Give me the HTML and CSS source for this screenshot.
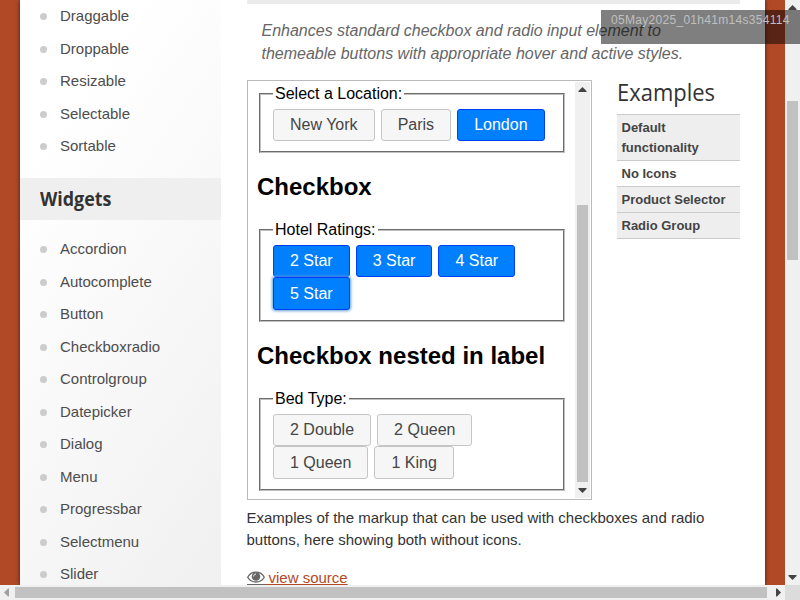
FILE: index.html
```html
<!DOCTYPE html>
<html lang="en">
<head>
<meta charset="utf-8">
<title>Checkboxradio | jQuery UI</title>
<link rel="stylesheet" href="styles.css">
</head>
<body>
<div class="window">
  <div class="page">
    <div class="container">
      <aside class="sidebar">
        <ul class="first">
          <li>Draggable</li><li>Droppable</li><li>Resizable</li><li>Selectable</li><li>Sortable</li>
        </ul>
        <h3 class="widget-title"><span>Widgets</span></h3>
        <ul>
          <li>Accordion</li><li>Autocomplete</li><li>Button</li><li>Checkboxradio</li><li>Controlgroup</li><li>Datepicker</li><li>Dialog</li><li>Menu</li><li>Progressbar</li><li>Selectmenu</li><li>Slider</li>
        </ul>
      </aside>
      <main class="content">
        <div class="rule"></div>
        <p class="desc">Enhances standard checkbox and radio input element to themeable buttons with appropriate hover and active styles.</p>
        <div class="demo-row">
          <div class="frame">
            <div class="doc">
              <div class="doc-body">
                <fieldset>
                  <legend>Select a Location:</legend>
                  <label class="btn">New York</label>
                  <label class="btn">Paris</label>
                  <label class="btn active">London</label>
                </fieldset>
                <h2>Checkbox</h2>
                <fieldset>
                  <legend>Hotel Ratings:</legend>
                  <label class="btn active">2 Star</label>
                  <label class="btn active">3 Star</label>
                  <label class="btn active">4 Star</label>
                  <label class="btn active focus">5 Star</label>
                </fieldset>
                <h2>Checkbox nested in label</h2>
                <fieldset>
                  <legend>Bed Type:</legend>
                  <label class="btn">2 Double</label>
                  <label class="btn">2 Queen</label>
                  <label class="btn">1 Queen</label>
                  <label class="btn">1 King</label>
                </fieldset>
              </div>
            </div>
            <div class="vbar inner">
              <svg class="arrow" viewBox="0 0 15 15"><path d="M3.5 10h8v-1l-4-4-4 4z"/></svg>
              <div class="track"><div class="thumb"></div></div>
              <svg class="arrow" viewBox="0 0 15 15"><path d="M3.5 5h8v1l-4 4-4-4z"/></svg>
            </div>
          </div>
          <nav class="examples">
            <h2><span>Examples</span></h2>
            <ul>
              <li>Default functionality</li><li class="current">No Icons</li><li>Product Selector</li><li>Radio Group</li>
            </ul>
          </nav>
        </div>
        <p class="note">Examples of the markup that can be used with checkboxes and radio buttons, here showing both without icons.</p>
        <a class="source"><svg class="eye" viewBox="0 0 18 13" preserveAspectRatio="xMinYMin meet"><path d="M.7 6.2C4.3-.5 13.7-.5 17.3 6.2 13.7 12.6 4.3 12.6.7 6.2z" fill="#fff" stroke="#666" stroke-width="1.3"/><circle cx="9" cy="5.5" r="4.3" fill="#666"/><path d="M6.7 5.5c0-1.5 1-2.4 2.3-2.4" fill="none" stroke="#fff" stroke-width="1"/></svg><span class="gap"></span><span>view source</span></a>
      </main>
    </div>
  </div>
  <div class="vbar outer">
    <svg class="arrow" viewBox="0 0 15 15"><path d="M3.5 10h8v-1l-4-4-4 4z"/></svg>
    <div class="track"><div class="thumb"></div></div>
    <svg class="arrow" viewBox="0 0 15 15"><path d="M3.5 5h8v1l-4 4-4-4z"/></svg>
  </div>
  <div class="hbar">
    <svg class="arrow dim" viewBox="0 0 15 15"><path d="M9 3.5v8h-1l-4-4 4-4z"/></svg>
    <div class="track"><div class="thumb"></div></div>
    <svg class="arrow" viewBox="0 0 15 15"><path d="M6 3.5v8h1l4-4-4-4z"/></svg>
  </div>
  <div class="corner"></div>
  <div class="stamp"><span>05May2025_01h41m14s354114</span></div>
</div>
</body>
</html>
```
FILE: styles.css
```css
* { box-sizing: border-box; }
body { margin: 0; font-family: "Liberation Sans", Arial, sans-serif; color: #333; }
ul { list-style: none; margin: 0; padding: 0; }
.window { position: relative; display: grid; grid-template: 585px 15px / 785px 15px; width: 800px; height: 600px; overflow: hidden; }
.page { background: #b24926; overflow: hidden; }
.container { display: flex; width: 745px; height: 585px; margin: 0 20px; background: #fff; box-shadow: 0 0 4px #222; }

.sidebar { width: 201px; background: linear-gradient(125deg, #fff 20%, #f0f0f0 100%); }
.sidebar .first { margin-top: -.6px; }
.sidebar li { display: flex; align-items: center; height: 32.5px; padding-left: 20px; font-size: 15px; color: #4d4d4d; }
.sidebar li::before { content: ""; width: 7px; height: 7px; margin: 2px 13px 0 0; border-radius: 50%; background: #ccc; }
.widget-title { display: flex; align-items: center; height: 42px; margin: 16.1px 0 12.5px; padding-left: 20px; background: #efefef; font: bold 20px/42px "Open Sans", sans-serif; color: #333; }
.widget-title span, .examples h2 span { display: inline-block; transform-origin: left center; }
.widget-title span { transform: scaleX(.895); }

.content { width: 493px; margin-left: 26px; }
.rule { height: 4px; background: #ebebeb; }
.desc { height: 46px; margin: 15px 15.5px 15px 14.5px; font-size: 16px; line-height: 23px; font-style: italic; color: #666; }
.demo-row { display: flex; gap: 25px; height: 420px; }
.frame { display: flex; width: 345px; height: 420px; padding: 1px; border: 1px solid #bbb; }
.doc { display: flex; align-items: flex-end; width: 326px; height: 416px; overflow: hidden; }
.doc-body { flex: 1; padding: 0 8px 6.85px; font-size: 16px; color: #000; }
.doc fieldset { border: 2px groove #c0c0c0; }
.doc h2 { margin: 19.9px 0; font-size: 24px; }
.btn { display: inline-block; margin-right: 1.6px; padding: 6.4px 16px; border: 1px solid #c5c5c5; border-radius: 3px; background: #f6f6f6; color: #454545; vertical-align: middle; }
.btn.active { background: #007fff; border-color: #003eff; color: #fff; }
.btn.focus { box-shadow: 0 0 3px 1px #5e9ed6; }

.examples { width: 123px; }
.examples h2 { height: 28px; margin: 0 0 6px; font: 400 24px/23px "Open Sans", sans-serif; color: #333; white-space: nowrap; }
.examples h2 span { transform: scaleX(.915); }
.examples ul { border-top: 1px solid #ccc; }
.examples li { padding: 3px 4px 2px 4.5px; border-bottom: 1px solid #ccc; background: #eee; font-size: 13px; font-weight: bold; line-height: 20px; color: #444; }
.examples .current { background: #fff; }
.note { margin: 7px 0 16px -.5px; font-size: 15px; line-height: 22px; }
.source { display: flex; align-items: flex-start; font-size: 15px; line-height: 22px; color: #b24926; text-decoration: underline; }
.eye { width: 18px; height: 14px; margin-top: 4px; border-bottom: 1px solid #666; }
.gap { width: 4px; height: 18px; margin-left: -.5px; border-bottom: 1px solid #b24926; }

.vbar { display: flex; flex-direction: column; width: 15px; background: #f0f0f0; }
.hbar { display: flex; height: 15px; background: #f0f0f0; }
.arrow { flex: none; width: 15px; height: 15px; fill: #444; }
.arrow.dim { fill: #a0a0a0; }
.track { flex: 1; }
.vbar .thumb { width: 11px; margin-left: 2px; background: #c1c1c1; }
.inner .thumb { height: 277px; margin-top: 108px; }
.outer .thumb { height: 159px; margin-top: 86px; }
.hbar .thumb { width: 752px; height: 11px; margin-top: 2px; background: #c1c1c1; }
.corner { background: #dcdcdc; }
.stamp { position: absolute; left: 601px; top: 10px; width: 199px; height: 34px; padding-left: 10px; background: rgba(0,0,0,.5); font: 12px/20px "Liberation Sans", sans-serif; letter-spacing: .3px; color: #bfbfbf; white-space: nowrap; }
```
